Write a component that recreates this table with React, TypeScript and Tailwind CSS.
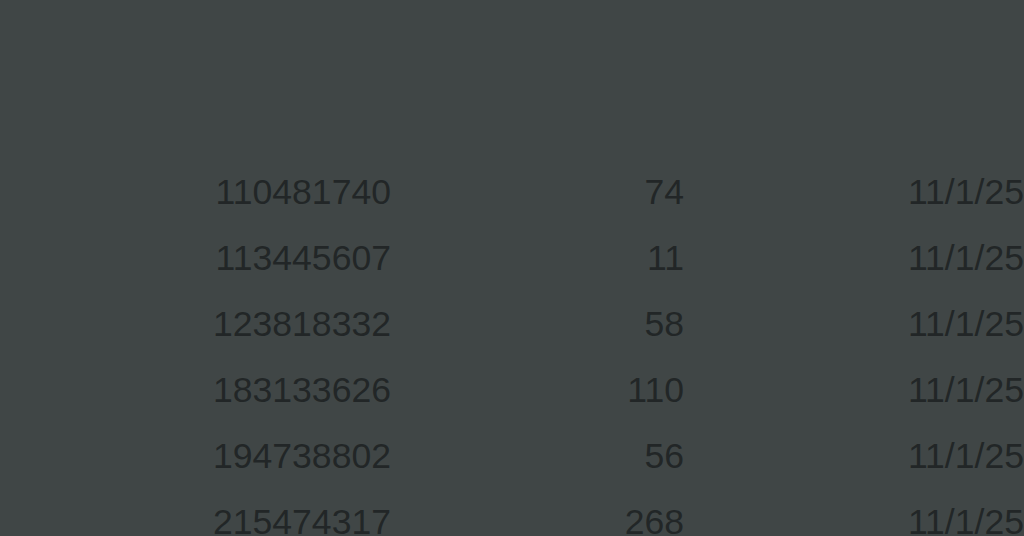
const rows = [
  { id: '110481740', qty: '74', date: '11/1/25' },
  { id: '113445607', qty: '11', date: '11/1/25' },
  { id: '123818332', qty: '58', date: '11/1/25' },
  { id: '183133626', qty: '110', date: '11/1/25' },
  { id: '194738802', qty: '56', date: '11/1/25' },
  { id: '215474317', qty: '268', date: '11/1/25' },
];

export default function App() {
  return (
    <div className="h-[536px] w-[1024px] overflow-hidden bg-[#404646] text-[#222627] font-['Liberation_Sans',Arial,sans-serif]">
      <div className="pt-[159px]">
        {rows.map((r) => (
          <div key={r.id} className="grid grid-cols-[391px_293px_340px] h-[66px] text-[35.6px] leading-[66px] whitespace-nowrap">
            <div className="text-right">{r.id}</div>
            <div className="text-right">{r.qty}</div>
            <div className="text-right">{r.date}</div>
          </div>
        ))}
      </div>
    </div>
  );
}
